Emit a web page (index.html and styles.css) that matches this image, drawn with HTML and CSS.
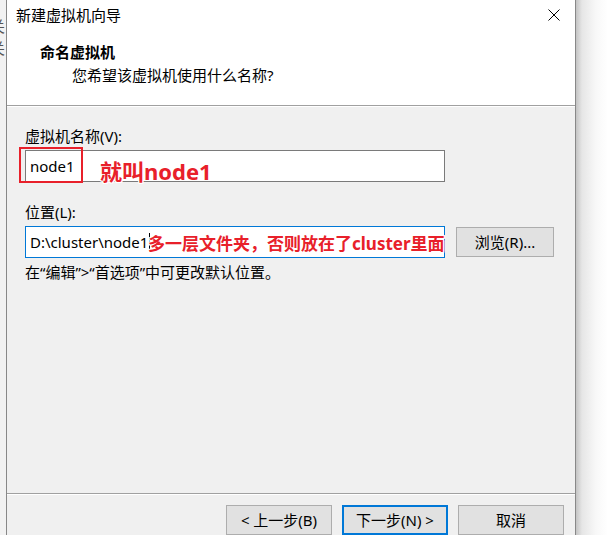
FILE: index.html
```html
<!DOCTYPE html>
<html lang="zh-CN">
<head>
<meta charset="utf-8">
<title>新建虚拟机向导</title>
<link rel="stylesheet" href="styles.css">
</head>
<body>
<div class="desk">
  <div class="behind"><span>关</span><span>关</span></div>
  <div class="win">
    <div class="header">
      <div class="titlebar">
        <span class="title">新建虚拟机向导</span>
        <svg class="close" width="12" height="12" viewBox="0 0 12 12"><path d="M0.5 0.5 L11.5 11.5 M11.5 0.5 L0.5 11.5" stroke="#000" stroke-width="1" fill="none"/></svg>
      </div>
      <div class="h-title">命名虚拟机</div>
      <div class="h-sub">您希望该虚拟机使用什么名称?</div>
    </div>
    <div class="content">
      <div class="label">虚拟机名称(V):</div>
      <div class="row">
        <div class="field">node1</div>
        <div class="mark-box"></div>
        <div class="note note-1">就叫node1</div>
      </div>
      <div class="label label-2">位置(L):</div>
      <div class="row">
        <div class="field focused">D:\cluster\node1<span class="caret"></span></div>
        <div class="btn browse">浏览(R)...</div>
        <div class="note note-2">多一层文件夹，否则放在了cluster里面</div>
      </div>
      <div class="hint">在“编辑”&gt;“首选项”中可更改默认位置。</div>
    </div>
    <div class="footer">
      <div class="btn wide">&lt; 上一步(B)</div>
      <div class="btn wide default">下一步(N) &gt;</div>
      <div class="btn wide">取消</div>
    </div>
  </div>
  <div class="shadow"></div>
</div>
</body>
</html>
```

FILE: styles.css
```css
html, body {
  margin: 0;
  padding: 0;
  background: #ffffff;
}
body {
  width: 612px;
  height: 535px;
  overflow: hidden;
  font-family: "Noto Sans", "Noto Sans CJK SC", sans-serif;
  font-size: 15px;
  color: #000;
}
.desk {
  display: flex;
  height: 535px;
}
.behind {
  width: 6px;
  flex: none;
  background: #f2f2f2;
  overflow: hidden;
  display: flex;
  flex-direction: column;
}
.behind span {
  display: block;
  margin-left: -10px;
  font-size: 15px;
  line-height: 22px;
  color: #555;
  font-family: "Noto Sans CJK SC", sans-serif;
}
.behind span:first-child { margin-top: 15px; }
.win {
  width: 568px;
  flex: none;
  border-left: 1px solid #888;
  border-right: 1px solid #888;
  background: #f0f0f0;
  display: flex;
  flex-direction: column;
}
.header {
  background: #fff;
  height: 106px;
  border-bottom: 1px solid #a0a0a0;
  box-sizing: content-box;
}
.titlebar {
  display: flex;
  justify-content: space-between;
  align-items: center;
  padding: 5px 15px 0 9px;
  height: 20px;
}
.title {
  line-height: 20px;
}
.close {
  display: block;
}
.h-title {
  font-weight: bold;
  line-height: 20px;
  margin-top: 17px;
  padding-left: 33px;
}
.h-sub {
  line-height: 20px;
  margin-top: 3px;
  padding-left: 65px;
}
.content {
  border-top: 1px solid #fff;
  border-bottom: 1px solid #a0a0a0;
  padding: 19px 0 0 18px;
  box-sizing: border-box;
  height: 392px;
}
.label {
  line-height: 20px;
}
.label-2 {
  margin-top: 20px;
}
.row {
  position: relative;
  display: flex;
  align-items: center;
  margin-top: 4px;
}
.field {
  width: 420px;
  height: 32px;
  box-sizing: border-box;
  border: 1px solid #7a7a7a;
  background: #fff;
  padding-left: 4px;
  line-height: 28px;
  display: flex;
  align-items: center;
}
.field.focused {
  border-color: #0078d7;
}
.caret {
  display: inline-block;
  width: 1px;
  height: 18px;
  background: #000;
  margin-left: 1px;
}
.btn {
  height: 30px;
  box-sizing: border-box;
  border: 1px solid #adadad;
  background: #e1e1e1;
  display: flex;
  align-items: center;
  justify-content: center;
  line-height: 20px;
}
.browse {
  width: 98px;
  margin-left: 11px;
}
.mark-box {
  position: absolute;
  left: -6px;
  top: -3px;
  width: 64px;
  height: 36px;
  box-sizing: border-box;
  border: 2px solid #e8202a;
}
.note {
  position: absolute;
  color: #e8202a;
  font-weight: bold;
  font-family: "Noto Sans", "Noto Sans CJK SC", sans-serif;
  white-space: nowrap;
  text-shadow: 1px 0 0 #fff, -1px 0 0 #fff, 0 1px 0 #fff, 0 -1px 0 #fff,
               1px 1px 0 #fff, -1px -1px 0 #fff, 1px -1px 0 #fff, -1px 1px 0 #fff;
}
.note-1 {
  left: 75px;
  top: 6px;
  font-size: 22px;
  line-height: 30px;
}
.note-2 {
  left: 123px;
  top: 3px;
  font-size: 17px;
  line-height: 30px;
}
.hint {
  line-height: 20px;
  margin-top: 4px;
}
.footer {
  border-top: 1px solid #fff;
  padding-top: 10px;
  display: flex;
  gap: 10px;
  padding-left: 219px;
  flex: 1;
}
.wide {
  width: 106px;
  height: 30px;
}
.default {
  border: 2px solid #0078d7;
}
.shadow {
  flex: 1;
  background: linear-gradient(to right, #c4c4c4 0, #e6e6e6 6px, #f8f8f8 20px, #fff 32px);
}
```
